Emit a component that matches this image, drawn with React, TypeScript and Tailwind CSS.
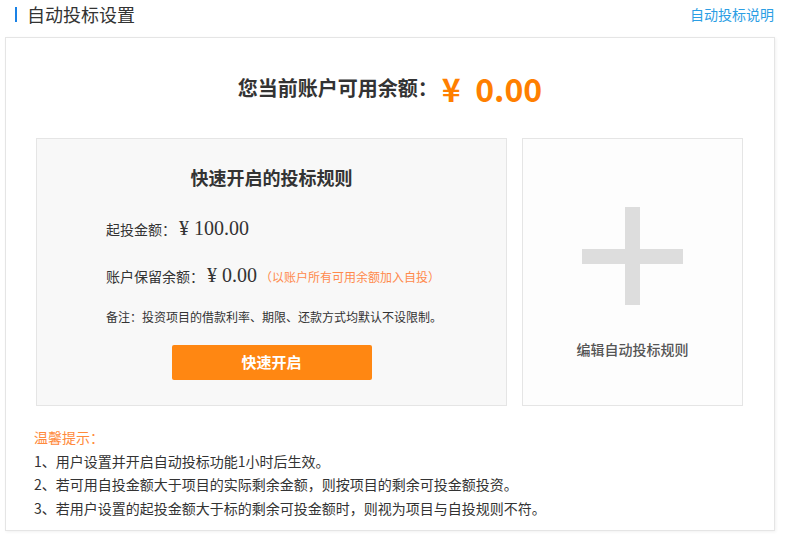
const cn = { fontFamily: '"Noto Sans CJK SC", "Noto Sans", sans-serif' };
const serif = { fontFamily: '"Liberation Serif", "Noto Sans CJK SC", serif' };

const tips = [
  "1、用户设置并开启自动投标功能1小时后生效。",
  "2、若可用自投金额大于项目的实际剩余金额，则按项目的剩余可投金额投资。",
  "3、若用户设置的起投金额大于标的剩余可投金额时，则视为项目与自投规则不符。",
];

export default function App() {
  return (
    <div className="w-[787px] h-[536px] bg-white text-[#333]" style={cn}>
      <div className="h-[37px] flex items-start justify-between pt-[2px]">
        <div className="flex items-center h-[24px]">
          <span className="ml-[15px] w-[2px] h-[15px] bg-[#1a82e6]" />
          <span className="ml-[10px] text-[18px] leading-[24px] text-[#333]">自动投标设置</span>
        </div>
        <a className="mr-[13px] text-[14px] leading-[24px] text-[#2b9ee4]">自动投标说明</a>
      </div>

      <div className="ml-[5px] w-[770px] h-[494px] border border-[#e5e5e5] shadow-[1px_1px_3px_rgba(0,0,0,0.06)] pt-[30px] px-[30px]">
        <div className="flex items-center justify-center h-[40px]">
          <span className="text-[20px] font-bold text-[#333]">您当前账户可用余额：</span>
          <span className="ml-[4px] text-[32px] font-bold text-[#ff7f00]">¥&nbsp;&nbsp;0.00</span>
        </div>

        <div className="mt-[30px] flex gap-[15px]">
          <div className="w-[471px] h-[268px] border border-[#e5e5e5] bg-[#f8f8f8] pt-[26px]">
            <div className="text-center text-[18px] font-bold leading-[24px] text-[#333]">快速开启的投标规则</div>
            <div className="pl-[69px]">
              <div className="mt-[24px] flex items-baseline h-[26px]">
                <span className="text-[14px]">起投金额：</span>
                <span className="ml-[3px] text-[20px]" style={serif}>¥ 100.00</span>
              </div>
              <div className="mt-[21px] flex items-baseline h-[26px]">
                <span className="text-[14px]">账户保留余额：</span>
                <span className="ml-[3px] text-[20px]" style={serif}>¥ 0.00</span>
                <span className="ml-[3px] text-[12px] text-[#ff8a4c]">（以账户所有可用余额加入自投）</span>
              </div>
              <div className="mt-[23px] text-[12px] leading-[16px] text-[#333]">
                备注：投资项目的借款利率、期限、还款方式均默认不设限制。
              </div>
            </div>
            <div className="mt-[20px] flex justify-center">
              <button className="w-[200px] h-[35px] rounded-[2px] bg-[#ff8712] text-white text-[15px] font-bold">
                快速开启
              </button>
            </div>
          </div>

          <div className="w-[221px] h-[268px] border border-[#e5e5e5] bg-[#fdfdfd] flex flex-col items-center pt-[68px]">
            <svg width="101" height="98" viewBox="0 0 101 98">
              <rect x="43" y="0" width="15" height="98" fill="#dddddd" />
              <rect x="0" y="42" width="101" height="15" fill="#dddddd" />
            </svg>
            <div className="mt-[34px] text-[14px] font-medium text-[#555]">编辑自动投标规则</div>
          </div>
        </div>

        <div className="mt-[20px] -ml-[2px] text-[14px] leading-[23.5px]">
          <div className="text-[#ff8a3c]">温馨提示：</div>
          {tips.map((t) => (
            <div key={t} className="text-[#333]">{t}</div>
          ))}
        </div>
      </div>
    </div>
  );
}
